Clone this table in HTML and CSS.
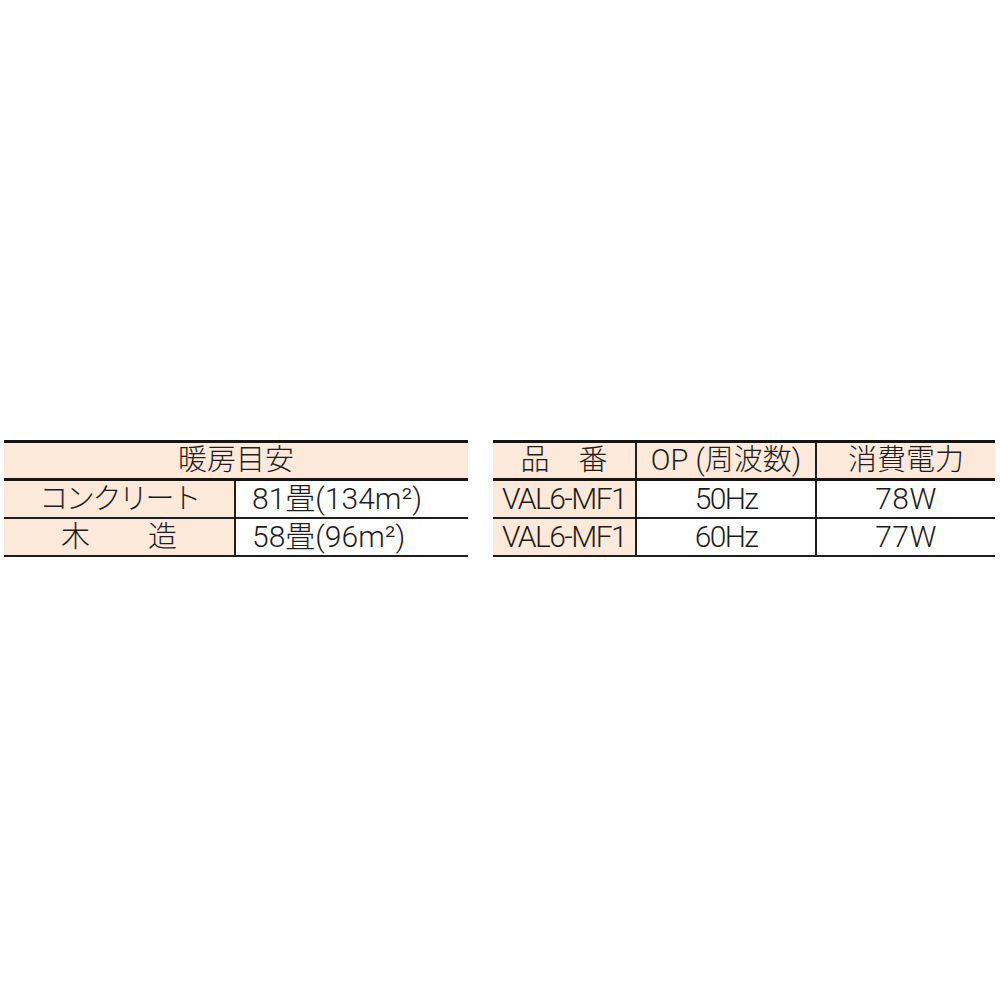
FILE: index.html
```html
<!DOCTYPE html>
<html lang="ja">
<head>
<meta charset="utf-8">
<link rel="stylesheet" href="styles.css">
</head>
<body>
<div class="page">
  <table class="spec spec-heat">
    <tr>
      <th colspan="2" class="head">暖房目安</th>
    </tr>
    <tr>
      <td class="label kana">コンクリート</td>
      <td class="value">81畳(134m²)</td>
    </tr>
    <tr>
      <td class="label">木　　造</td>
      <td class="value">58畳(96m²)</td>
    </tr>
  </table>
  <table class="spec spec-model">
    <tr>
      <th class="head col1 div">品　番</th>
      <th class="head col2 div">OP (周波数)</th>
      <th class="head col3">消費電力</th>
    </tr>
    <tr>
      <td class="label latin div">VAL6-MF1</td>
      <td class="center latin div">50Hz</td>
      <td class="center watt">78W</td>
    </tr>
    <tr>
      <td class="label latin div">VAL6-MF1</td>
      <td class="center latin div">60Hz</td>
      <td class="center watt">77W</td>
    </tr>
  </table>
</div>
</body>
</html>
```

FILE: styles.css
```css
html, body {
  margin: 0;
  padding: 0;
  background: #ffffff;
}

.page {
  display: flex;
  align-items: flex-start;
  gap: 25px;
  padding: 440px 0 0 4px;
  font-family: "Roboto", "Noto Sans CJK JP", sans-serif;
  font-weight: 300;
  color: #1f1c1d;
}

.spec {
  border-collapse: separate;
  border-spacing: 0;
  border-top: 3px solid #151515;
  table-layout: fixed;
}

.spec-heat {
  width: 464px;
}

.spec-model {
  width: 502px;
}

.spec th,
.spec td {
  padding: 0;
  font-size: 29px;
  font-weight: 300;
  white-space: nowrap;
  overflow: hidden;
}

.spec th {
  height: 35px;
  line-height: 35px;
  background: #fde9da;
  border-bottom: 3px solid #151515;
  text-align: center;
}

.spec td {
  height: 36px;
  line-height: 36px;
  border-bottom: 2px solid #1e1e1e;
}

.spec-heat .label {
  width: 231px;
  border-right: 2px solid #1e1e1e;
  background: #fde9da;
  text-align: center;
}

.spec-heat .value {
  text-align: left;
  padding-left: 16px;
  font-size: 30px;
}

.kana {
  letter-spacing: -2.4px;
}

.spec-model .label {
  background: #fde9da;
  text-align: center;
}

.spec-model .col1 { width: 142px; }
.spec-model .col2 { width: 178px; }
.spec-model .col3 { width: 178px; }

.div {
  border-right: 2px solid #1e1e1e;
}

.center {
  text-align: center;
}

.spec .latin {
  font-size: 30px;
  letter-spacing: -1.6px;
}

.spec .watt {
  font-size: 30px;
  letter-spacing: 0.5px;
}
```
